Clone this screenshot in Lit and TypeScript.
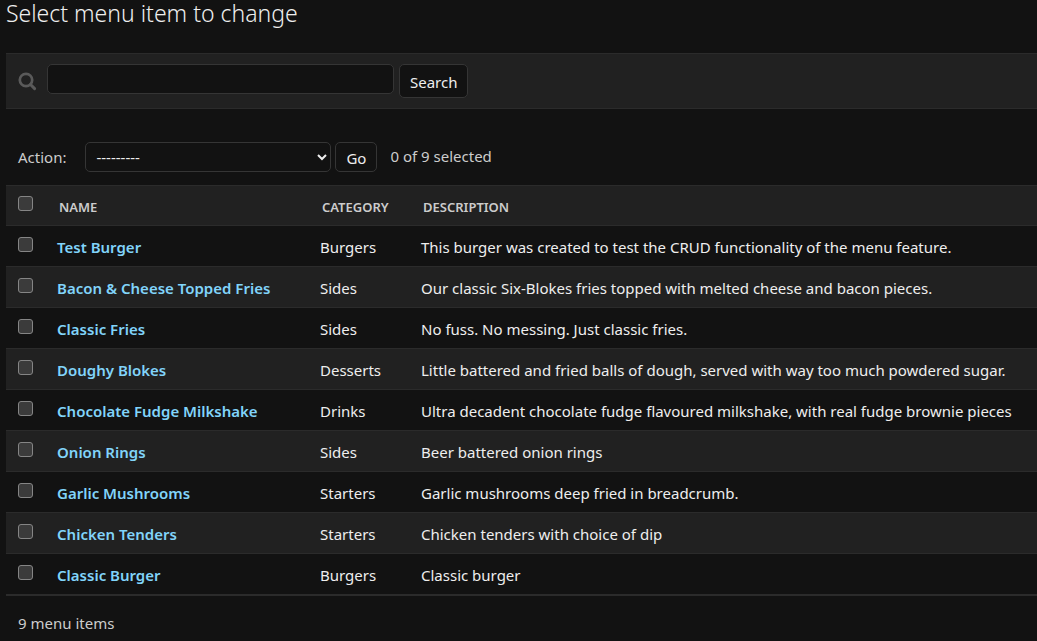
import { LitElement, css, html } from "lit";
import { customElement, state } from "lit/decorators.js";

interface MenuItem {
  name: string;
  category: string;
  description: string;
}

const ITEMS: MenuItem[] = [
  { name: "Test Burger", category: "Burgers", description: "This burger was created to test the CRUD functionality of the menu feature." },
  { name: "Bacon & Cheese Topped Fries", category: "Sides", description: "Our classic Six-Blokes fries topped with melted cheese and bacon pieces." },
  { name: "Classic Fries", category: "Sides", description: "No fuss. No messing. Just classic fries." },
  { name: "Doughy Blokes", category: "Desserts", description: "Little battered and fried balls of dough, served with way too much powdered sugar." },
  { name: "Chocolate Fudge Milkshake", category: "Drinks", description: "Ultra decadent chocolate fudge flavoured milkshake, with real fudge brownie pieces" },
  { name: "Onion Rings", category: "Sides", description: "Beer battered onion rings" },
  { name: "Garlic Mushrooms", category: "Starters", description: "Garlic mushrooms deep fried in breadcrumb." },
  { name: "Chicken Tenders", category: "Starters", description: "Chicken tenders with choice of dip" },
  { name: "Classic Burger", category: "Burgers", description: "Classic burger" },
];

@customElement("app-root")
export class AppRoot extends LitElement {
  @state() private selected = new Set<number>();

  static styles = css`
    :host {
      display: block;
      box-sizing: border-box;
      min-height: 100vh;
      padding-left: 6px;
      background: #121212;
      color: #eeeeee;
      color-scheme: dark;
      font-family: "Segoe UI", "Noto Sans", "Open Sans", sans-serif;
      font-size: 15px;
      line-height: 20px;
    }
    * { box-sizing: border-box; }
    .title {
      margin: 0 0 27px;
      font-family: "Segoe UI", "Noto Sans", sans-serif;
      font-size: 23px;
      line-height: 26px;
      font-weight: 300;
    }
    .search {
      display: flex;
      align-items: flex-start;
      padding: 10px 12px;
      background: #212121;
      border-top: 1px solid #2b2b2b;
      border-bottom: 1px solid #2b2b2b;
    }
    .search-label {
      display: flex;
      align-items: center;
      height: 34px;
      margin-right: 10px;
    }
    .field {
      width: 347px;
      height: 30px;
      padding: 4px 8px;
    }
    .field, .button, .select {
      margin: 0;
      background: #121212;
      border: 1px solid #353535;
      border-radius: 5px;
      color: #eeeeee;
      font: inherit;
    }
    .button { padding: 4px 10px 2px; height: 30px; }
    .button-search { height: 34px; margin-left: 5px; }
    .actions {
      display: flex;
      align-items: flex-start;
      gap: 4px;
      padding: 33px 12px 13px;
      color: #cccccc;
    }
    .action-label {
      display: flex;
      align-items: center;
      gap: 19px;
      line-height: 30px;
    }
    .select {
      width: 246px;
      height: 30px;
      padding: 0 0 0 6px;
    }
    .counter { margin-left: 9px; line-height: 28px; }
    .table {
      width: 100%;
      table-layout: fixed;
      border-spacing: 0;
      border-top: 1px solid #2b2b2b;
      border-bottom: 1px solid #2b2b2b;
    }
    .col-check { width: 43px; }
    .col-name { width: 263px; }
    .col-category { width: 101px; }
    .head, .cell {
      height: 41px;
      padding: 2px 8px 0;
      border-bottom: 1px solid #2b2b2b;
      text-align: left;
      vertical-align: middle;
      white-space: nowrap;
      font-weight: 400;
    }
    .head {
      height: 40px;
      padding-left: 10px;
      background: #212121;
      color: #cccccc;
      font-size: 13px;
      font-weight: 600;
      text-transform: uppercase;
    }
    .row:nth-child(even) { background: #212121; }
    .check-cell {
      padding: 11px 0 0 12px;
      vertical-align: top;
    }
    .head.check-cell { padding-top: 10px; }
    .check {
      display: block;
      appearance: none;
      width: 15px;
      height: 15px;
      margin: 0;
      background: #3b3b3b;
      border: 1px solid #858585;
      border-radius: 3px;
    }
    .check:checked { background: #81d4fa; }
    .link {
      color: #81d4fa;
      font-weight: 600;
      text-decoration: none;
    }
    .total {
      margin: 0;
      padding: 17px 12px 7px;
      color: #cccccc;
    }
  `;

  private toggle(index: number) {
    const next = new Set(this.selected);
    if (!next.delete(index)) next.add(index);
    this.selected = next;
  }

  private toggleAll(event: Event) {
    const checked = (event.target as HTMLInputElement).checked;
    this.selected = new Set(checked ? ITEMS.map((_, i) => i) : []);
  }

  render() {
    return html`
      <h1 class="title">Select menu item to change</h1>
      <form class="search" role="search" @submit=${(e: Event) => e.preventDefault()}>
        <label class="search-label" for="query" aria-label="Search menu items">
          <svg width="19" height="20" viewBox="0 0 19 20" fill="none" stroke="#5a5a5a" aria-hidden="true">
            <circle cx="8" cy="9" r="6.2" stroke-width="2.7" />
            <path d="M12.5 13.5 16.6 17.6" stroke-width="3" stroke-linecap="round" />
          </svg>
        </label>
        <input class="field" id="query" type="text" />
        <button class="button button-search" type="submit">Search</button>
      </form>
      <div class="actions">
        <label class="action-label">Action:
          <select class="select">
            <option>---------</option>
            <option>Delete selected menu items</option>
          </select>
        </label>
        <button class="button" type="button">Go</button>
        <span class="counter">${this.selected.size} of ${ITEMS.length} selected</span>
      </div>
      <table class="table">
        <colgroup>
          <col class="col-check" /><col class="col-name" /><col class="col-category" /><col />
        </colgroup>
        <thead>
          <tr>
            <th class="head check-cell">
              <input class="check" type="checkbox" aria-label="Select all menu items"
                .checked=${this.selected.size === ITEMS.length} @change=${this.toggleAll} />
            </th>
            <th class="head" scope="col">Name</th>
            <th class="head" scope="col">Category</th>
            <th class="head" scope="col">Description</th>
          </tr>
        </thead>
        <tbody>
          ${ITEMS.map((item, i) => html`
            <tr class="row">
              <td class="cell check-cell">
                <input class="check" type="checkbox" aria-label="Select ${item.name}"
                  .checked=${this.selected.has(i)} @change=${() => this.toggle(i)} />
              </td>
              <th class="cell" scope="row"><a class="link" href="#">${item.name}</a></th>
              <td class="cell">${item.category}</td>
              <td class="cell">${item.description}</td>
            </tr>`)}
        </tbody>
      </table>
      <p class="total">${ITEMS.length} menu items</p>
    `;
  }
}
